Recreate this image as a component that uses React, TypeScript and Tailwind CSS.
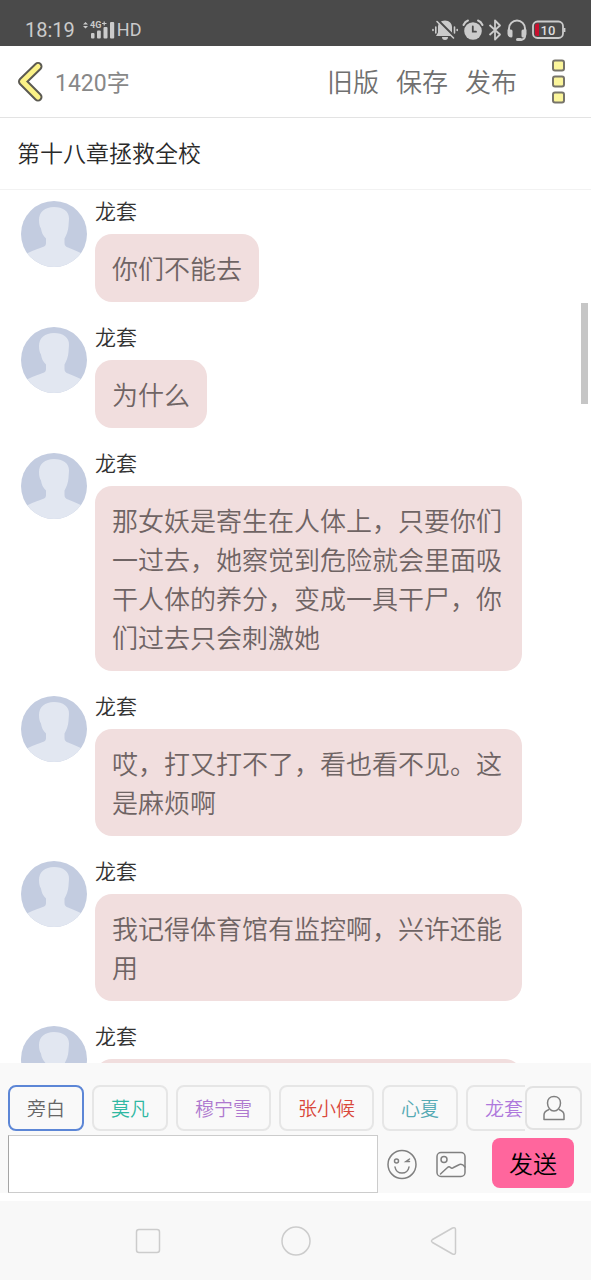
import { useState } from 'react';

type Message = { id: number; name: string; text: string };

const messages: Message[] = [
  { id: 1, name: '龙套', text: '你们不能去' },
  { id: 2, name: '龙套', text: '为什么' },
  { id: 3, name: '龙套', text: '那女妖是寄生在人体上，只要你们一过去，她察觉到危险就会里面吸干人体的养分，变成一具干尸，你们过去只会刺激她' },
  { id: 4, name: '龙套', text: '哎，打又打不了，看也看不见。这是麻烦啊' },
  { id: 5, name: '龙套', text: '我记得体育馆有监控啊，兴许还能用' },
  { id: 6, name: '龙套', text: '' },
];

const roles = [
  { name: '旁白', color: 'text-[#666666]' },
  { name: '莫凡', color: 'text-[#2fb8a2]' },
  { name: '穆宁雪', color: 'text-[#ae78cf]' },
  { name: '张小候', color: 'text-[#d9483b]' },
  { name: '心夏', color: 'text-[#55aab4]' },
  { name: '龙套', color: 'text-[#ae78dc]' },
];

function StatusBar() {
  return (
    <div className="flex h-[46px] shrink-0 items-center bg-[#4a4a4a] pt-[13px] pr-[25px] pl-[25px] font-normal text-[#cbcbcb]">
      <span className="text-[20px] leading-6">18:19</span>
      <svg className="ml-2 h-5 w-[34px]" viewBox="0 0 34 20" fill="currentColor">
        <path d="M0 4.500 2.500 2 5 4.500zM0 6 2.500 8.500 5 6z" />
        <text x="7" y="8" fontSize="9" fontWeight="700">4G</text>
        <path d="M19 3.500h4.500M21.200 1.500v4" stroke="currentColor" strokeWidth="1.200" />
        <rect x="8" y="13" width="3.500" height="5.500" rx="1" />
        <rect x="14" y="10.500" width="3.800" height="8" rx="1" />
        <rect x="20.500" y="7" width="4" height="11.500" rx="1" />
        <rect x="27" y="2" width="4.200" height="16.500" rx="1" />
      </svg>
      <span className="text-[18px] leading-6">HD</span>
      <div className="ml-auto flex items-center gap-1">
        <svg className="h-[22px] w-[26px]" viewBox="0 0 26 22" fill="none" stroke="currentColor" strokeWidth="1.6" strokeLinecap="round">
          <path d="M13 1.500c4.500 0 7 3 7 6.500v5.500l2 3.500H4l2-3.500V8c0-3.500 2.500-6.500 7-6.500z" fill="currentColor" stroke="none" />
          <path d="M10 18a3 3 0 0 0 6 0z" fill="currentColor" stroke="none" />
          <path d="M6.500 2 22.500 18" stroke="#4a4a4a" strokeWidth="2.500" />
          <path d="M5 2.500 21.500 19M1 10.500v1M3.800 8v6M22.500 8v6M25.200 10.500v1" />
        </svg>
        <svg className="h-[22px] w-[22px]" viewBox="0 0 22 22" fill="none" stroke="currentColor" strokeWidth="2" strokeLinecap="round">
          <circle cx="11" cy="12" r="8.800" fill="currentColor" stroke="none" />
          <path d="M1.500 6Q3 2.500 6 1.500M20.500 6Q19 2.500 16 1.500" />
          <path d="M10.800 7.500v5.200H14" stroke="#4a4a4a" strokeWidth="1.800" />
        </svg>
        <svg className="h-[22px] w-[14px]" viewBox="0 0 14 22" fill="none" stroke="currentColor" strokeWidth="1.800" strokeLinejoin="round">
          <path d="M1.500 6 12 15.500 7 20.500V1.500L12 6.500 1.500 16" />
        </svg>
        <svg className="h-[22px] w-[22px]" viewBox="0 0 22 22" fill="none" stroke="currentColor" strokeWidth="2" strokeLinecap="round">
          <path d="M3 14V9.500a8 8 0 0 1 16 0V17q0 4-6 4" />
          <path d="M1.500 10.500H5A1.500 1.500 0 0 1 6.500 12v5A1.500 1.500 0 0 1 5 18.500Q1.500 18 1.500 15zM20.500 10.500H17a1.500 1.500 0 0 0-1.500 1.500v5a1.500 1.500 0 0 0 1.500 1.500q3.500-.5 3.500-3.500z" fill="currentColor" stroke="none" />
          <path d="M11.500 20.500h3" strokeWidth="3" />
        </svg>
        <svg className="h-[22px] w-[34px]" viewBox="0 0 34 22" fill="none">
          <rect x="1" y="2.500" width="30" height="16.500" rx="4.500" stroke="currentColor" strokeWidth="1.800" />
          <path d="M32.500 9v4" stroke="currentColor" strokeWidth="1.800" />
          <path d="M7 4.500v12.500H5.500A2.500 2.500 0 0 1 3 14.500V7A2.500 2.500 0 0 1 5.500 4.500z" fill="#c8102e" />
          <text x="8.500" y="15.500" fontSize="13" fontWeight="500" fill="#dddddd">10</text>
        </svg>
      </div>
    </div>
  );
}

function Header() {
  return (
    <header className="flex h-[72px] shrink-0 items-center border-b border-[#e3e3e3] pr-[25px] pl-4 text-[#707070]">
      <button aria-label="返回">
        <svg className="h-[42px] w-7" viewBox="0 0 28 42" fill="none" strokeLinecap="round" strokeLinejoin="round">
          <path d="M22 5.500 6.500 20.500 22 36" stroke="#5c5a52" strokeWidth="9" />
          <path d="M22 5.500 6.500 20.500 22 36" stroke="#fbf287" strokeWidth="5" />
        </svg>
      </button>
      <span className="ml-[11px] pt-1 text-[23px] leading-8 font-normal text-[#888888]">1420字</span>
      <nav className="ml-auto flex gap-[17px] pt-[3px] text-[26px] leading-9">
        <button>旧版</button>
        <button>保存</button>
        <button>发布</button>
      </nav>
      <button className="ml-[34px]" aria-label="更多">
        <svg className="h-[46px] w-[15px]" viewBox="0 0 15 46" fill="#fbf59b" stroke="#77746a" strokeWidth="2">
          <rect x="2" y="1.500" width="11" height="10" rx="2" />
          <rect x="2" y="17.500" width="11" height="10" rx="2" />
          <rect x="2" y="33.500" width="11" height="10" rx="2" />
        </svg>
      </button>
    </header>
  );
}

function Avatar() {
  return (
    <svg className="h-[66px] w-[66px] shrink-0 rounded-full bg-[#c3cce0]" viewBox="0 0 66 66" fill="#e2e7f1">
      <path d="M33 6c9 0 15.500 4.500 15 12l-.5 7c-.3 5-2 9-4 12.500V42c0 2.500 1 3.500 3.500 4.500 6 2.500 11 4.500 16 7V66H3V54c5-3 11-5 17.500-7.500 3.500-1.200 4.500-2 4.500-4.500v-4.500c-3-3-4.500-6-5-10-1.500-2-2-5-2-8.500C18 11 24 6 33 6z" />
    </svg>
  );
}

function ChatMessage({ message }: { message: Message }) {
  return (
    <li className="flex gap-2">
      <Avatar />
      <div className="min-w-0 flex-1">
        <div className="mb-2.5 text-[21px] leading-[23px] text-[#333333]">{message.name}</div>
        {message.text ? (
          <p className="w-fit rounded-[17px] bg-[#f1dede] px-[17px] pt-[17px] pb-3 text-[26px] leading-[39px] text-[#6f6464]">{message.text}</p>
        ) : (
          <p className="h-[107px] rounded-[17px] bg-[#f1dede]" />
        )}
      </div>
    </li>
  );
}

function Composer() {
  const [role, setRole] = useState(0);
  const [text, setText] = useState('');

  return (
    <div className="shrink-0 bg-[#f9f9f9] pt-[22px] pr-[9px] pl-2">
      <div className="flex items-center">
        <div className="flex min-w-0 flex-1 gap-2 overflow-hidden">
          {roles.map((r, i) => (
            <button
              key={r.name}
              onClick={() => setRole(i)}
              className={`h-[46px] shrink-0 rounded-lg border-2 px-[17px] pt-1 text-[19px] leading-6 ${r.color} ${i === role ? 'border-[#5c86d6]' : 'border-[#e6e6e6]'}`}
            >
              {r.name}
            </button>
          ))}
        </div>
        <button className="flex h-11 w-[57px] shrink-0 items-center justify-center rounded-lg border-2 border-[#e2e2e2]" aria-label="角色">
          <svg className="h-[26px] w-[22px]" viewBox="0 0 22 26" fill="none" stroke="#808080" strokeWidth="1.500" strokeLinejoin="round">
            <path d="M11 1.500c4 0 6.500 2.700 6.500 6.500 0 4.500-3 8-6.500 8s-6.500-3.500-6.500-8c0-3.800 2.500-6.500 6.500-6.500zM6 14.500c-3.500 1.300-5 2.500-5 5.500v4.500h20V20c0-3-1.500-4.200-5-5.500" />
          </svg>
        </button>
      </div>
      <div className="mt-1 flex items-center">
        <input
          aria-label="输入内容"
          value={text}
          onChange={(e) => setText(e.target.value)}
          className="h-[58px] min-w-0 flex-1 border border-[#cccccc] border-l-[#a5a5a5] bg-white px-3 text-[22px] outline-none"
        />
        <button className="ml-2" aria-label="表情">
          <svg className="h-8 w-8" viewBox="0 0 32 32" fill="none" stroke="#808080" strokeWidth="1.500" strokeLinecap="round">
            <circle cx="16" cy="16.500" r="14" />
            <circle cx="10.500" cy="13" r="2" />
            <path d="M23.500 11 20 13.500h3.500M9 19c.5 3.500 3.500 6 7 6s6.500-2.500 7-6" />
          </svg>
        </button>
        <button className="ml-[17px]" aria-label="图片">
          <svg className="h-8 w-8" viewBox="0 0 32 32" fill="none" stroke="#808080" strokeWidth="1.500" strokeLinecap="round" strokeLinejoin="round">
            <rect x="2" y="4.500" width="28" height="24" rx="4" />
            <circle cx="9" cy="11.500" r="3" />
            <path d="m5.500 26 7-6.500c1-1 2-1 3 0s2 1 3 0l5-2.500c2.500-1.500 4.500-.5 6.500 2" />
          </svg>
        </button>
        <button className="mr-2 mb-0.5 ml-[25px] h-[50px] w-[82px] rounded-lg bg-[#ff669d] pt-1 text-[24px] leading-8 text-black">发送</button>
      </div>
    </div>
  );
}

function SystemNav() {
  return (
    <div className="flex h-[79px] shrink-0 items-center justify-center bg-[#f8f8f8]">
      <button aria-label="最近任务">
        <svg className="h-8 w-8" viewBox="0 0 32 32" fill="none" stroke="#cccccc" strokeWidth="1.500">
          <rect x="4.500" y="4.500" width="23" height="23" rx="2.500" />
        </svg>
      </button>
      <button aria-label="主页" className="mx-[116px]">
        <svg className="h-8 w-8" viewBox="0 0 32 32" fill="none" stroke="#cccccc" strokeWidth="1.500">
          <circle cx="16" cy="16" r="14" />
        </svg>
      </button>
      <button aria-label="后退">
        <svg className="h-8 w-8" viewBox="0 0 32 32" fill="none" stroke="#cccccc" strokeWidth="1.500" strokeLinejoin="round">
          <path d="M4.500 14.500 24.500 3q3-1 3 1.500v23q0 2.500-3 1.500L4.500 17.500q-2-1.500 0-3z" />
        </svg>
      </button>
    </div>
  );
}

export default function App() {
  return (
    <div className="flex h-screen flex-col overflow-hidden bg-white font-['Roboto','Noto_Sans_CJK_SC',sans-serif] font-[350]" lang="zh-CN">
      <StatusBar />
      <Header />
      <h1 className="flex h-[72px] shrink-0 items-center border-b border-[#f2f2f2] px-[17px] pt-[3px] text-[23px] leading-8 font-[350] text-[#2a2a2a]">第十八章拯救全校</h1>
      <main className="relative min-h-0 flex-1 overflow-hidden">
        <ul className="flex flex-col gap-[25px] pt-[11px] pr-[69px] pl-[21px]">
          {messages.map((m) => (
            <ChatMessage key={m.id} message={m} />
          ))}
        </ul>
        <div className="absolute top-[113px] right-[3px] h-[101px] w-[7px] bg-[#c6c6c6]" />
      </main>
      <Composer />
      <div className="h-2 shrink-0 bg-white" />
      <SystemNav />
    </div>
  );
}
